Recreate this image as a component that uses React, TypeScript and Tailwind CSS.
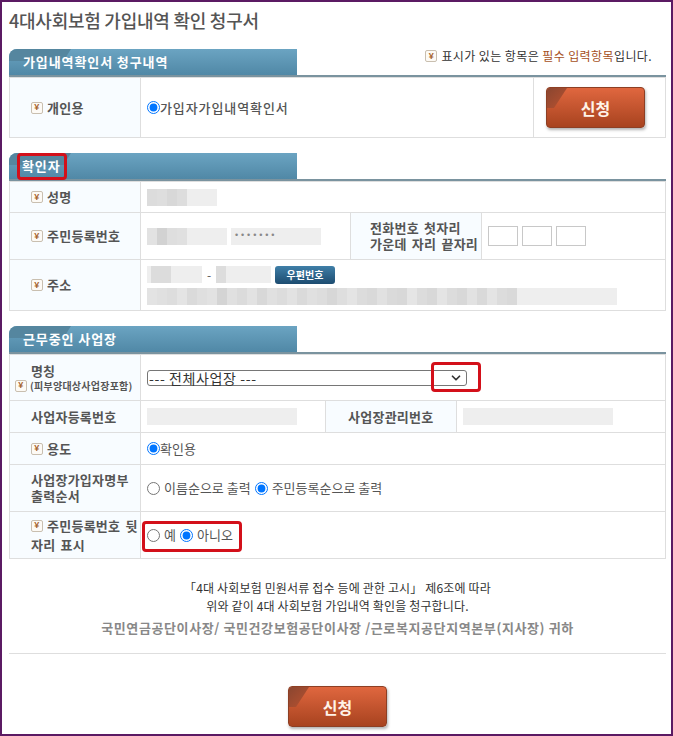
import type { FC, ReactNode } from 'react';
import { ChevronDown } from 'lucide-react';

const KR = 'font-["Noto_Sans_CJK_KR","Liberation_Sans",sans-serif]';

const Req: FC = () => (
  <span className="inline-flex h-[12px] w-[12px] shrink-0 items-center justify-center rounded-[2px] border border-[#c9bfb0] bg-[#fdfaf5] font-['Liberation_Sans',sans-serif] text-[9px] font-bold leading-none text-[#a5622c]">
    ¥
  </span>
);

const SectionTab: FC<{ title: string; className?: string }> = ({ title, className }) => (
  <div className="border-b-2 border-[#7a939f]">
    <div className="relative flex h-[26px] w-[288px] items-center overflow-hidden rounded-tl-[8px] bg-gradient-to-b from-[#6ba4c2] to-[#5088a6]">
      <span className="absolute left-0 top-0 h-[12px] w-[62px] bg-[#55869f] [clip-path:polygon(0_0,100%_0,88%_100%,0_100%)]" />
      <span className={`relative text-[13px] font-bold tracking-[0.9px] text-white ${className ?? 'pl-[14px]'}`}>{title}</span>
    </div>
  </div>
);

const Th: FC<{ children: ReactNode; req?: boolean; inset?: string }> = ({ children, req, inset }) => (
  <th className="border border-[#dedede] bg-[#f8fcff] text-left align-middle text-[13px] font-bold leading-[16px] tracking-[0.25px] text-[#555] [word-spacing:2px]">
    <div className={`flex items-center gap-[4px] whitespace-nowrap ${inset ?? 'pl-[21px]'}`}>
      {req && <Req />}
      <span>{children}</span>
    </div>
  </th>
);

const Td: FC<{ children: ReactNode; colSpan?: number; className?: string }> = ({ children, colSpan, className }) => (
  <td colSpan={colSpan} className={`border border-[#dedede] px-[6px] align-middle text-[13px] text-[#555] ${className ?? ''}`}>
    {children}
  </td>
);

// pixelated patch standing in for masked personal data
const Masked: FC<{ w: number; cells: string[]; className?: string }> = ({ w, cells, className }) => (
  <div className={`flex overflow-hidden bg-[#eeeeee] ${className ?? ''}`} style={{ width: w }}>
    {cells.map((c, i) => (
      <span key={i} className="h-full w-[10px] shrink-0" style={{ backgroundColor: c }} />
    ))}
  </div>
);

const Radio: FC<{ name: string; checked?: boolean }> = ({ name, checked }) => (
  <input type="radio" name={name} defaultChecked={checked} className="m-0 h-[13px] w-[13px] shrink-0 align-middle" />
);

const ApplyButton: FC = () => (
  <button className="relative flex h-[41px] w-[99px] items-center justify-center overflow-hidden rounded-[4px] border border-[#8d3f24] bg-gradient-to-b from-[#e0673f] to-[#a8431f] text-[16px] font-bold text-[#fff3e8] shadow-[1px_2px_3px_rgba(0,0,0,0.3)]">
    <span className="absolute left-0 top-0 h-[20px] w-[20px] bg-gradient-to-br from-[#8a4630] to-[#b9512f] [clip-path:polygon(0_0,100%_0,35%_100%,0_100%)]" />
    <span className="relative">신청</span>
  </button>
);

const HL = 'pointer-events-none absolute rounded-[4px] border-[3px] border-[#d3101a]';

export default function App() {
  return (
    <div className={`relative h-[736px] w-[673px] overflow-hidden border-x-2 border-y-2 border-[#5b1a63] bg-white pl-[7px] pr-[5px] ${KR}`}>
      <h1 className="pt-[6px] text-[18px] font-medium leading-[24px] tracking-[-0.25px] text-[#555]">4대사회보험 가입내역 확인 청구서</h1>

      <div className="relative mt-[17px]">
        <p className="absolute right-[14px] top-[-1px] flex items-center gap-[4px] text-[12px] leading-[16px] tracking-[0.4px] text-[#333]">
          <Req />
          <span>
            표시가 있는 항목은 <span className="text-[#a5501c]">필수 입력항목</span>입니다.
          </span>
        </p>
        <SectionTab title="가입내역확인서 청구내역" />
      </div>
      <table className="w-full table-fixed border-collapse">
        <colgroup>
          <col className="w-[131px]" />
          <col />
          <col className="w-[132px]" />
        </colgroup>
        <tbody>
          <tr className="h-[60px]">
            <Th req>개인용</Th>
            <Td className="font-medium tracking-[0.9px]">
              <label className="flex items-center gap-0">
                <Radio name="kind" checked />
                <span>가입자가입내역확인서</span>
              </label>
            </Td>
            <Td className="pl-[12px]">
              <ApplyButton />
            </Td>
          </tr>
        </tbody>
      </table>

      <div className="mt-[15px]">
        <SectionTab title="확인자" className="pl-[13px]" />
      </div>
      <table className="w-full table-fixed border-collapse">
        <colgroup>
          <col className="w-[131px]" />
          <col className="w-[210px]" />
          <col className="w-[131px]" />
          <col />
        </colgroup>
        <tbody>
          <tr className="h-[31px]">
            <Th req>성명</Th>
            <Td colSpan={3}>
              <Masked w={70} className="h-[17px]" cells={['#dcdcdc', '#dedede', '#d8d8d8', '#dddddd']} />
            </Td>
          </tr>
          <tr className="h-[47px]">
            <Th req>주민등록번호</Th>
            <Td>
              <div className="flex gap-[4px]">
                <Masked w={80} className="h-[17px]" cells={['#e2e2e2', '#d2d2d2', '#dedede', '#e0e0e0']} />
                <div className="flex h-[17px] w-[90px] items-center bg-[#eeeeee] pl-[4px] font-['Liberation_Sans',sans-serif] text-[9px] tracking-[2.9px] text-[#888]">•••••••</div>
              </div>
            </Td>
            <Th inset="pl-[19px]">
              전화번호 첫자리
              <br />
              가운데 자리 끝자리
            </Th>
            <Td>
              <div className="flex gap-[4px]">
                <span className="h-[20px] w-[30px] border border-[#c8c8c8]" />
                <span className="h-[20px] w-[30px] border border-[#c8c8c8]" />
                <span className="h-[20px] w-[30px] border border-[#c8c8c8]" />
              </div>
            </Td>
          </tr>
          <tr className="h-[51px]">
            <Th req>주소</Th>
            <Td colSpan={3}>
              <div className="flex items-center">
                <Masked w={55} className="h-[17px] pl-[4px]" cells={['#dcdcdc', '#dcdcdc']} />
                <span className="w-[14px] text-center text-[12px] leading-none text-[#555]">-</span>
                <Masked w={55} className="h-[17px]" cells={['#dddddd']} />
                <button className="ml-[4px] h-[18px] w-[60px] rounded-[3px] bg-gradient-to-b from-[#3f7fa8] to-[#1d4c70] text-[10px] font-bold leading-none text-white">우편번호</button>
              </div>
              <Masked
                w={470}
                className="mt-[4px] h-[17px]"
                cells={['#e3e3e3', '#e0e0e0', '#dddddd', '#e4e4e4', '#dadada', '#dfdfdf', '#e2e2e2', '#d4d4d4', '#e0e0e0', '#dbdbdb', '#e2e2e2', '#d8d8d8', '#e0e0e0', '#dcdcdc', '#e2e2e2', '#dadada', '#e0e0e0', '#dddddd', '#d7d7d7', '#dedede', '#e4e4e4', '#dcdcdc', '#d9d9d9', '#e1e1e1', '#dadada', '#d8d8d8', '#e5e5e5', '#dcdcdc', '#d8d8d8', '#e4e4e4', '#dcdcdc', '#d8d8d8', '#e2e2e2', '#d9d9d9', '#e4e4e4', '#dcdcdc', '#d9d9d9']}
              />
            </Td>
          </tr>
        </tbody>
      </table>

      <div className="mt-[15px]">
        <SectionTab title="근무중인 사업장" />
      </div>
      <table className="w-full table-fixed border-collapse">
        <colgroup>
          <col className="w-[131px]" />
          <col className="w-[185px]" />
          <col className="w-[131px]" />
          <col />
        </colgroup>
        <tbody>
          <tr className="h-[46px]">
            <th className="border border-[#dedede] bg-[#f8fcff] align-middle font-bold text-[#555]">
              <div className="pl-[21px] text-left text-[13px] leading-[16px]">명칭</div>
              <div className="flex items-center gap-[3px] pl-[5px] text-left text-[10px] leading-[14px] tracking-[0.25px]">
                <Req />
                <span className="whitespace-nowrap">(피부양대상사업장포함)</span>
              </div>
            </th>
            <Td colSpan={3}>
              <button className="flex h-[16px] w-[320px] items-center justify-between rounded-[3px] border border-[#767676] bg-white pl-[1px] pr-[3px] text-[14px] leading-none tracking-[0.6px] text-[#333]">
                <span>--- 전체사업장 ---</span>
                <ChevronDown size={14} strokeWidth={3} className="text-[#333]" />
              </button>
            </Td>
          </tr>
          <tr className="h-[32px]">
            <Th>사업자등록번호</Th>
            <Td>
              <div className="h-[17px] w-[150px] bg-[#eeeeee]" />
            </Td>
            <Th inset="pl-[22px]">사업장관리번호</Th>
            <Td>
              <div className="h-[17px] w-[150px] bg-[#eeeeee]" />
            </Td>
          </tr>
          <tr className="h-[32px]">
            <Th req>용도</Th>
            <Td colSpan={3}>
              <label className="flex items-center">
                <Radio name="use" checked />
                <span>확인용</span>
              </label>
            </Td>
          </tr>
          <tr className="h-[47px]">
            <Th>
              사업장가입자명부
              <br />
              출력순서
            </Th>
            <Td colSpan={3}>
              <div className="flex items-center gap-[4px]">
                <Radio name="order" />
                <span>이름순으로 출력</span>
                <Radio name="order" checked />
                <span>주민등록순으로 출력</span>
              </div>
            </Td>
          </tr>
          <tr className="h-[47px]">
            <th className="border border-[#dedede] bg-[#f8fcff] pl-[21px] text-left align-middle text-[13px] font-bold leading-[16px] tracking-[0.25px] text-[#555] [word-spacing:2px]">
              <div className="flex items-center gap-[4px] whitespace-nowrap">
                <Req />
                주민등록번호 뒷
              </div>
              <div className="mt-[3px]">자리 표시</div>
            </th>
            <Td colSpan={3}>
              <div className="flex items-center gap-[4px]">
                <Radio name="show" />
                <span>예</span>
                <Radio name="show" checked />
                <span>아니오</span>
              </div>
            </Td>
          </tr>
        </tbody>
      </table>

      <div className="mt-[20px] text-center text-[12px] leading-[18px] tracking-[0.15px] text-[#333]">
        <p>「4대 사회보험 민원서류 접수 등에 관한 고시」 제6조에 따라</p>
        <p>위와 같이 4대 사회보험 가입내역 확인을 청구합니다.</p>
        <p className="mt-[4px] text-[13px] font-bold tracking-[0.6px] text-[#888]">국민연금공단이사장/ 국민건강보험공단이사장 /근로복지공단지역본부(지사장) 귀하</p>
      </div>
      <div className="mt-[16px] border-t border-[#dedede]" />
      <div className="mt-[32px] flex justify-center">
        <ApplyButton />
      </div>

      {/* red annotation boxes over the form */}
      <span className={`${HL} left-[15px] top-[151px] h-[27px] w-[50px]`} />
      <span className={`${HL} left-[429px] top-[360px] h-[30px] w-[50px]`} />
      <span className={`${HL} left-[140px] top-[519px] h-[31px] w-[100px]`} />
    </div>
  );
}
